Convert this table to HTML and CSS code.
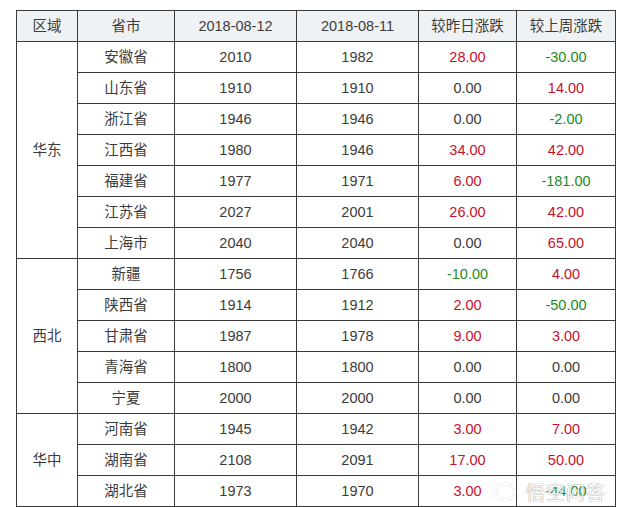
FILE: index.html
```html
<!DOCTYPE html>
<html lang="zh">
<head>
<meta charset="utf-8">
<link rel="stylesheet" href="styles.css">
</head>
<body>
<div class="wrap">
<table class="price">
<colgroup>
<col class="c1"><col class="c2"><col class="c3"><col class="c4"><col class="c5"><col class="c6">
</colgroup>
<thead>
<tr><th>区域</th><th>省市</th><th>2018-08-12</th><th>2018-08-11</th><th>较昨日涨跌</th><th>较上周涨跌</th></tr>
</thead>
<tbody>
<tr><td rowspan="7">华东</td><td>安徽省</td><td>2010</td><td>1982</td><td class="up">28.00</td><td class="down">-30.00</td></tr>
<tr><td>山东省</td><td>1910</td><td>1910</td><td>0.00</td><td class="up">14.00</td></tr>
<tr><td>浙江省</td><td>1946</td><td>1946</td><td>0.00</td><td class="down">-2.00</td></tr>
<tr><td>江西省</td><td>1980</td><td>1946</td><td class="up">34.00</td><td class="up">42.00</td></tr>
<tr><td>福建省</td><td>1977</td><td>1971</td><td class="up">6.00</td><td class="down">-181.00</td></tr>
<tr><td>江苏省</td><td>2027</td><td>2001</td><td class="up">26.00</td><td class="up">42.00</td></tr>
<tr><td>上海市</td><td>2040</td><td>2040</td><td>0.00</td><td class="up">65.00</td></tr>
<tr><td rowspan="5">西北</td><td>新疆</td><td>1756</td><td>1766</td><td class="down">-10.00</td><td class="up">4.00</td></tr>
<tr><td>陕西省</td><td>1914</td><td>1912</td><td class="up">2.00</td><td class="down">-50.00</td></tr>
<tr><td>甘肃省</td><td>1987</td><td>1978</td><td class="up">9.00</td><td class="up">3.00</td></tr>
<tr><td>青海省</td><td>1800</td><td>1800</td><td>0.00</td><td>0.00</td></tr>
<tr><td>宁夏</td><td>2000</td><td>2000</td><td>0.00</td><td>0.00</td></tr>
<tr><td rowspan="3">华中</td><td>河南省</td><td>1945</td><td>1942</td><td class="up">3.00</td><td class="up">7.00</td></tr>
<tr><td>湖南省</td><td>2108</td><td>2091</td><td class="up">17.00</td><td class="up">50.00</td></tr>
<tr><td>湖北省</td><td>1973</td><td>1970</td><td class="up">3.00</td><td class="down">-44.00</td></tr>
</tbody>
</table>
<div class="watermark"><span class="logo"></span><span class="wm-text">悟空问答</span></div>
</div>
</body>
</html>
```
FILE: styles.css
```css
html, body {
  margin: 0;
  padding: 0;
  background: #ffffff;
}
.wrap {
  position: relative;
  padding: 10px 0 0 16px;
  width: 604px;
  height: 497px;
  overflow: hidden;
}
.price {
  border-collapse: collapse;
  table-layout: fixed;
  width: 600px;
  font-family: "Liberation Sans", "Noto Sans CJK SC", sans-serif;
  font-size: 14.5px;
  color: #3c3c3c;
}
.c1 { width: 61px; }
.c2 { width: 97px; }
.c3 { width: 122px; }
.c4 { width: 122px; }
.c5 { width: 98px; }
.c6 { width: 99px; }
.price th, .price td {
  border: 1px solid #3a3a3a;
  height: 30px;
  padding: 0;
  text-align: center;
  vertical-align: middle;
  font-weight: normal;
  line-height: 16px;
}
.price th {
  background: #eff2f5;
}
.up { color: #c8102e; }
.down { color: #238a23; }
.watermark {
  position: absolute;
  left: 494px;
  top: 478px;
  display: flex;
  align-items: center;
  gap: 10px;
  opacity: 0.85;
}
.logo {
  width: 22px;
  height: 18px;
  border-radius: 50%;
  border: 2px solid #ffffff;
  box-shadow: 0 0 1px #999999, inset 0 0 1px #999999;
  box-sizing: border-box;
}
.wm-text {
  font-family: "Noto Sans CJK SC", sans-serif;
  font-size: 19px;
  color: #ffffff;
  text-shadow: 0 0 1px #8a8a8a, 0 0 1px #8a8a8a;
  letter-spacing: 1px;
}
```
